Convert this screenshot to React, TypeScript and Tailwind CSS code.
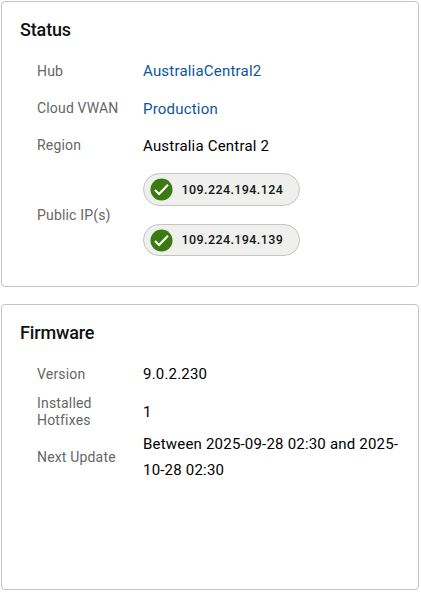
import type { ReactNode } from "react";

const Card = ({ title, children }: { title: string; children: ReactNode }) => (
  <section className="h-[286px] rounded border border-[#c4c4c4] bg-white px-[18px] pt-4">
    <h2 className="text-lg leading-6 font-medium tracking-[-0.15px] text-[#111111]">{title}</h2>
    <div className="pt-[10px] pl-[17px]">{children}</div>
  </section>
);

const Row = ({ label, className = "", children }: { label: string; className?: string; children: ReactNode }) => (
  <div className={`flex items-center ${className}`}>
    <div className="w-[106px] shrink-0 pr-4 text-sm leading-[17px] tracking-[0.17px] text-[#666666]">{label}</div>
    <div className="text-[15px] leading-[26px] tracking-[0.2px] text-black">{children}</div>
  </div>
);

const IpChip = ({ ip }: { ip: string }) => (
  <div className="flex h-[32.3px] w-[157px] items-center rounded-full border border-[#c4c4c4] bg-[#efefed] pl-[5.5px]">
    <svg className="size-[23px]" viewBox="0 0 24 24">
      <circle cx="12" cy="12" r="11.5" fill="#3b7a12" />
      <path d="M5.2 12.5l4.3 4.2 9.2-9.7" fill="none" stroke="#fff" strokeWidth="2.2" />
    </svg>
    <span className="ml-[9px] text-[12.5px] leading-4 font-medium tracking-[0.4px] text-[#161616]">{ip}</span>
  </div>
);

export default function App() {
  return (
    <main className="flex h-[592px] flex-col gap-[17px] bg-white pt-px pr-0.5 pl-px font-['Roboto',sans-serif]">
      <Card title="Status">
        <Row label="Hub" className="h-[38px]">
          <a className="text-[#0d559c]">AustraliaCentral2</a>
        </Row>
        <Row label="Cloud VWAN" className="h-[37px]">
          <a className="text-[#0d559c]">Production</a>
        </Row>
        <Row label="Region" className="h-[37px]">Australia Central 2</Row>
        <Row label="Public IP(s)" className="h-[102px]">
          <div className="flex flex-col gap-[18.4px] pb-[0.2px]">
            <IpChip ip="109.224.194.124" />
            <IpChip ip="109.224.194.139" />
          </div>
        </Row>
      </Card>
      <Card title="Firmware">
        <Row label="Version" className="h-[38px]">9.0.2.230</Row>
        <Row label="Installed Hotfixes" className="h-[38px]">1</Row>
        <Row label="Next Update" className="h-[52px]">
          Between 2025-09-28 02:30 and 2025-<wbr />10-28 02:30
        </Row>
      </Card>
    </main>
  );
}
